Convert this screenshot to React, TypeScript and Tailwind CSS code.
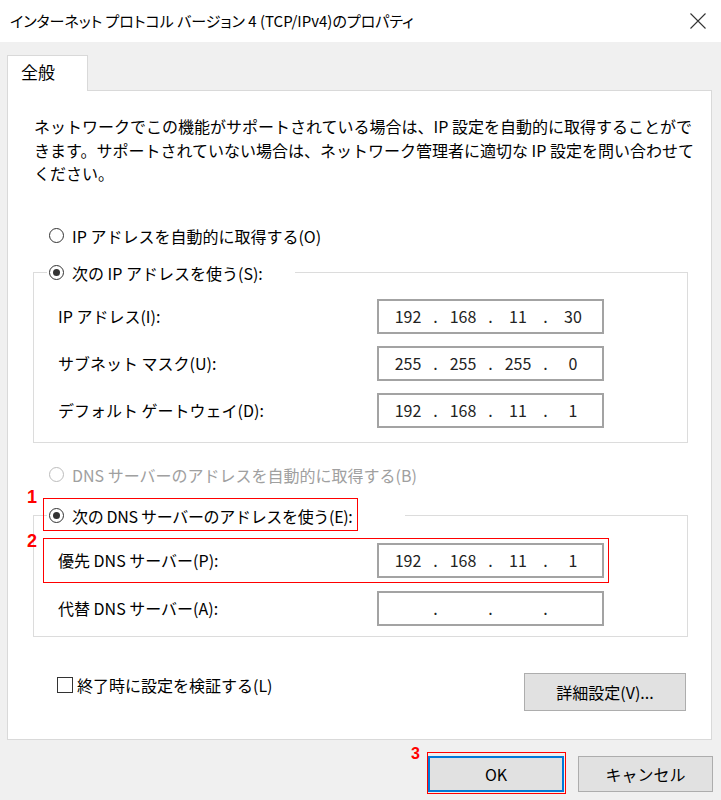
import type { ReactNode } from "react";

function Radio({ checked, disabled }: { checked?: boolean; disabled?: boolean }) {
  return (
    <span
      className={`w-[15px] h-[15px] rounded-full border bg-white flex items-center justify-center shrink-0 ${
        disabled ? "border-[#bcbcbc]" : "border-[#333333]"
      }`}
    >
      {checked && <span className="w-[7px] h-[7px] rounded-full bg-[#333333]" />}
    </span>
  );
}

function IpBox({ parts }: { parts: string[] }) {
  return (
    <div className="w-[227px] h-[35px] border-2 border-[#a3a3a3] bg-white flex items-center pl-[7px] text-[16px] text-[#222]">
      {parts.map((p, i) => (
        <div key={i} className="flex items-center">
          <span className="w-[44px] text-center">{p}</span>
          {i < 3 && <span className="w-[11px] text-center">.</span>}
        </div>
      ))}
    </div>
  );
}

function Row({ label, parts }: { label: string; parts: string[] }) {
  return (
    <div className="flex items-center pl-[24px]">
      <span className="w-[319px]">{label}</span>
      <IpBox parts={parts} />
    </div>
  );
}

function Group({ legend, legendWidth, children }: { legend: ReactNode; legendWidth: string; children: ReactNode }) {
  return (
    <fieldset className="ml-[25px] w-[655px] border border-[#dcdcdc]">
      <legend className={`ml-[13px] px-[2px] ${legendWidth}`}>{legend}</legend>
      {children}
    </fieldset>
  );
}

export default function App() {
  return (
    <div className="relative w-[721px] h-[800px] overflow-hidden bg-[#f0f0f0] text-black text-[16px] font-['Noto_Sans_CJK_JP',sans-serif]">
      {/* タイトルバー */}
      <div className="h-[42px] bg-white flex items-center justify-between pl-[10px] pr-[15px]">
        <span className="text-[15px] [font-feature-settings:'palt']">
          インターネット プロトコル バージョン 4 (TCP/IPv4)のプロパティ
        </span>
        <svg width="16" height="16" viewBox="0 0 16 16" className="text-[#333]">
          <path d="M0.5 0.5 L15.5 15.5 M15.5 0.5 L0.5 15.5" stroke="currentColor" strokeWidth="1.1" />
        </svg>
      </div>

      {/* タブ */}
      <div className="pt-[13px] pl-[7px]">
        <div className="relative z-10 w-[81px] h-[36px] -mb-px bg-white border border-b-0 border-[#d9d9d9] pl-[13px] pt-[4px] text-[17px] leading-[24px]">
          全般
        </div>
      </div>

      {/* パネル */}
      <div className="ml-[7px] w-[705px] h-[650px] bg-white border border-[#d9d9d9] pt-[24px] flex flex-col">
        <p className="pl-[26px] leading-[23.5px]">
          ネットワークでこの機能がサポートされている場合は、IP 設定を自動的に取得することがで
          <br />
          きます。サポートされていない場合は、ネットワーク管理者に適切な IP 設定を問い合わせて
          <br />
          ください。
        </p>

        <div className="mt-[38px] h-[24px] pl-[41px] flex items-center gap-[8px]">
          <Radio />
          <span>IP アドレスを自動的に取得する(O)</span>
        </div>

        <div className="mt-[13px]">
          <Group
            legendWidth="w-[248px]"
            legend={
              <div className="h-[24px] flex items-center gap-[8px]">
                <Radio checked />
                <span>次の IP アドレスを使う(S):</span>
              </div>
            }
          >
            <div className="pt-[14px] pb-[14px] flex flex-col gap-[12px]">
              <Row label="IP アドレス(I):" parts={["192", "168", "11", "30"]} />
              <Row label="サブネット マスク(U):" parts={["255", "255", "255", "0"]} />
              <Row label="デフォルト ゲートウェイ(D):" parts={["192", "168", "11", "1"]} />
            </div>
          </Group>
        </div>

        <div className="mt-[20px] h-[24px] pl-[41px] flex items-center gap-[8px] text-[#a0a0a0]">
          <Radio disabled />
          <span>DNS サーバーのアドレスを自動的に取得する(B)</span>
        </div>

        <div className="mt-[17px]">
          <Group
            legendWidth="w-[358px]"
            legend={
              <div className="h-[24px] flex items-center gap-[8px]">
                <Radio checked />
                <span className="tracking-[-0.02em]">次の DNS サーバーのアドレスを使う(E):</span>
              </div>
            }
          >
            <div className="pt-[15px] pb-[10px] flex flex-col gap-[13px]">
              <Row label="優先 DNS サーバー(P):" parts={["192", "168", "11", "1"]} />
              <Row label="代替 DNS サーバー(A):" parts={["", "", "", ""]} />
            </div>
          </Group>
        </div>

        <div className="mt-[36px] flex items-start justify-between pl-[49px] pr-[25px]">
          <div className="h-[24px] flex items-center gap-[4px]">
            <span className="w-[16px] h-[16px] border border-[#333] bg-white" />
            <span>終了時に設定を検証する(L)</span>
          </div>
          <button className="w-[162px] h-[38px] bg-[#e1e1e1] border border-[#adadad]">詳細設定(V)...</button>
        </div>
      </div>

      {/* 下部ボタン */}
      <div className="mt-[16px] flex justify-end gap-[14px] pr-[8px]">
        <button className="w-[136px] h-[36px] bg-[#e1e1e1] border-2 border-[#0078d7]">OK</button>
        <button className="w-[135px] h-[36px] bg-[#e1e1e1] border border-[#adadad]">キャンセル</button>
      </div>

      {/* 注釈 */}
      <div className="absolute left-[43px] top-[498px] w-[315px] h-[33px] border border-[#ff0000]" />
      <span className="absolute left-[27px] top-[484px] text-[18px] font-bold text-[#ff0000] font-['Liberation_Sans',sans-serif]">1</span>
      <div className="absolute left-[43px] top-[538px] w-[566px] h-[45px] border border-[#ff0000]" />
      <span className="absolute left-[27px] top-[528px] text-[18px] font-bold text-[#ff0000] font-['Liberation_Sans',sans-serif]">2</span>
      <div className="absolute left-[427px] top-[752px] w-[139px] h-[42px] border border-[#ff0000]" />
      <span className="absolute left-[411px] top-[742px] text-[16px] font-bold text-[#ff0000] font-['Liberation_Sans',sans-serif]">3</span>
    </div>
  );
}
